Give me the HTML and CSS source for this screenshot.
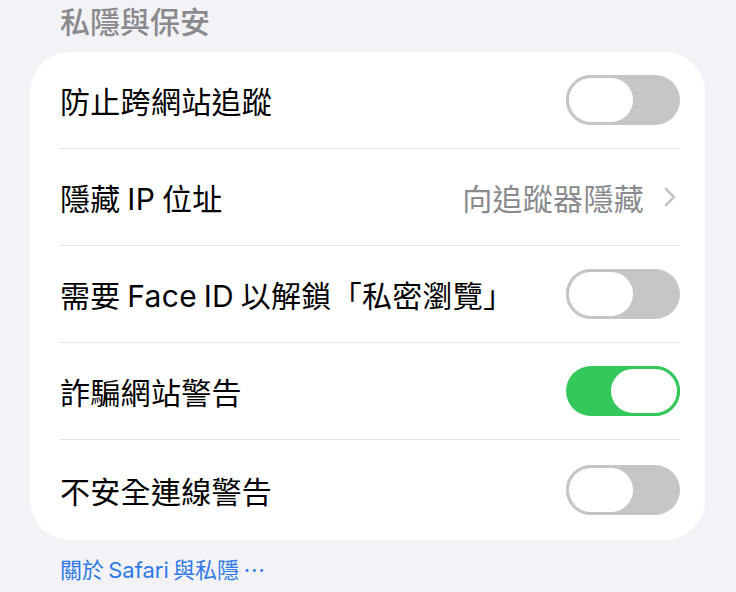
FILE: index.html
```html
<!DOCTYPE html>
<html lang="zh-Hant">
<head>
    <meta charset="UTF-8">
    <title>私隱與保安</title>
    <link rel="stylesheet" href="styles.css">
</head>
<body>
    <h3 class="section-title">私隱與保安</h3>

    <!-- 設定項目 -->
    <div class="card">
        <div class="row">
            <span class="label">防止跨網站追蹤</span>
            <label class="toggle-switch">
                <input type="checkbox">
                <span class="slider"></span>
            </label>
        </div>
        <div class="row">
            <span class="label">隱藏 IP 位址</span>
            <span class="value">
                向追蹤器隱藏
                <svg class="chevron" width="12" height="20" viewBox="0 0 12 20">
                    <polyline points="2,2 10,10 2,18" fill="none" stroke="#c4c4c7" stroke-width="2.6" stroke-linecap="round" stroke-linejoin="round"/>
                </svg>
            </span>
        </div>
        <div class="row">
            <span class="label">需要 Face ID 以解鎖「私密瀏覽」</span>
            <label class="toggle-switch">
                <input type="checkbox">
                <span class="slider"></span>
            </label>
        </div>
        <div class="row">
            <span class="label">詐騙網站警告</span>
            <label class="toggle-switch">
                <input type="checkbox" checked>
                <span class="slider"></span>
            </label>
        </div>
        <div class="row">
            <span class="label">不安全連線警告</span>
            <label class="toggle-switch">
                <input type="checkbox">
                <span class="slider"></span>
            </label>
        </div>
    </div>

    <p class="footer"><a href="#">關於 Safari 與私隱 ⋯</a></p>
</body>
</html>
```

FILE: styles.css
```css
body {
    margin: 0;
    background-color: #f2f2f7;
    font-family: "Inter", "Noto Sans CJK TC", sans-serif;
    color: #000;
}

.section-title {
    margin: 0 0 8px;
    padding: 0 60px;
    height: 44px;
    line-height: 44px;
    font-size: 30px;
    font-weight: 500;
    color: #8a8a8e;
}

.card {
    margin: 0 31px 0 30px;
    background-color: #fff;
    border-radius: 40px;
    padding: 0 25px 0 30px;
}

.row {
    display: flex;
    justify-content: space-between;
    align-items: center;
    height: 96px;
    border-bottom: 1px solid #e3e3e6;
}

.row:last-child {
    height: 100px;
    border-bottom: none;
}

.label {
    font-size: 30px;
    letter-spacing: 0.3px;
    word-spacing: -2px;
}

.value {
    display: flex;
    align-items: center;
    gap: 20px;
    font-size: 30px;
    letter-spacing: 0.3px;
    color: #8a8a8e;
    padding-right: 4px;
}

/* トグルスイッチ */
.toggle-switch {
    position: relative;
    display: inline-block;
    width: 114px;
    height: 50px;
}

.toggle-switch input {
    opacity: 0;
    width: 0;
    height: 0;
}

.slider {
    position: absolute;
    top: 0;
    left: 0;
    right: 0;
    bottom: 0;
    background-color: #c6c6c8;
    border-radius: 25px;
}

.slider:before {
    position: absolute;
    content: "";
    top: 0;
    left: 0;
    width: 70px;
    height: 50px;
    box-sizing: border-box;
    background-color: #fff;
    border: 3px solid #c6c6c8;
    border-radius: 25px;
}

input:checked + .slider {
    background-color: #34c759;
}

input:checked + .slider:before {
    left: 42px;
    width: 72px;
    border-color: #34c759;
}

.footer {
    margin: 14px 0 0;
    padding: 0 60px;
    font-size: 22px;
    line-height: 32px;
    word-spacing: -2px;
}

.footer a {
    color: #2f7ae5;
    text-decoration: none;
}
```
